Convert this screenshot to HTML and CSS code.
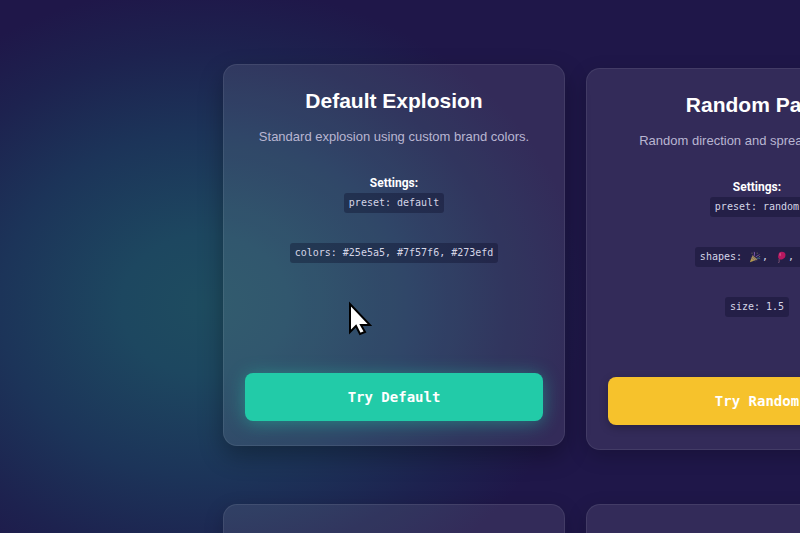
FILE: index.html
```html
<!DOCTYPE html>
<html lang="en">
  <head>
    <meta charset="UTF-8" />
    <meta name="viewport" content="width=device-width, initial-scale=1.0" />
    <title>Explosion Demos</title>
    <link rel="stylesheet" href="styles.css" />
  </head>
  <body>
    <main class="demo-grid">
      <section class="card card-active">
        <h2>Default Explosion</h2>
        <p class="description">Standard explosion using custom brand colors.</p>
        <div class="settings">
          <strong>Settings:</strong>
          <code>preset: default</code>
          <code>colors: #25e5a5, #7f57f6, #273efd</code>
        </div>
        <button type="button" class="btn btn-default">Try Default</button>
      </section>

      <section class="card">
        <h2>Random Party</h2>
        <p class="description">Random direction and spread with emoji.</p>
        <div class="settings">
          <strong>Settings:</strong>
          <code>preset: random</code>
          <code
            >shapes:
            <svg class="shape" viewBox="0 0 14 14" aria-hidden="true">
              <path d="M1 13 4 5l6 5z" fill="#b39a4c" />
              <path d="m3 8 4 4M4 6l5 5" stroke="#6c5a7c" />
              <path d="M6 6c0-2 1-3 0-5M8 7c1-2 3-1 4-3" fill="none" stroke="#8a62b8" />
              <path d="M9 9c1-1 3-1 4 0" fill="none" stroke="#4f8fa8" />
              <path d="M3 2h1v1H3zM9 2h1v1H9zM12 6h1v1h-1z" fill="#a8a060" /></svg
            >,
            <svg class="shape" viewBox="0 0 14 14" aria-hidden="true">
              <path d="M5 9c-1 2 1 3-1 5" fill="none" stroke="#8a5a78" />
              <path d="M8 1c3 0 5 2 4 5 0 2-3 4-6 4-2-1-3-3-2-5 0-2 1-4 4-4z" fill="#b81860" />
              <ellipse cx="6" cy="4" rx="1" ry="2" fill="#d04882" /></svg
            >,
            <svg class="shape" viewBox="0 0 14 14" aria-hidden="true">
              <path d="m7 1 2 4 4 2-4 2-2 4-2-4-4-2 4-2z" fill="#c9a640" /></svg
          ></code>
          <code>size: 1.5</code>
        </div>
        <button type="button" class="btn btn-random">Try Random</button>
      </section>

      <section class="card"></section>
      <section class="card"></section>
    </main>

    <svg class="cursor" viewBox="0 0 24 36" aria-hidden="true">
      <path
        d="M2 4v28l6-6 4 8 5-2-4-7h9z"
        fill="#fff"
        stroke="#000"
        stroke-width="2"
      />
    </svg>
  </body>
</html>
```

FILE: styles.css
```css
* {
  box-sizing: border-box;
}

body {
  position: relative;
  min-height: 100vh;
  max-height: 100vh;
  margin: 0;
  overflow: hidden;
  font-family: "Liberation Sans", Arial, sans-serif;
  color: #fff;
  background: radial-gradient(
      ellipse 380px 320px at 205px 305px,
      #1e4c60 0,
      #1d4760 22%,
      #1c3459 54%,
      #1d224f 80%,
      #1f1749 100%
    )
    #1f1749;
}

.demo-grid {
  display: grid;
  grid-template-columns: repeat(2, 342px);
  gap: 54px 21px;
  padding: 68px 0 0 223px;
}

.card {
  display: flex;
  flex-direction: column;
  min-height: 382px;
  padding: 21px 21px 24px;
  text-align: center;
  background: rgba(255, 255, 255, 0.09);
  border: 1px solid rgba(255, 255, 255, 0.08);
  border-radius: 14px;
  box-shadow: 0 6px 20px rgba(0, 0, 0, 0.2);
}

/* hover state: the card is lifted */
.card-active {
  transform: translateY(-4px);
  box-shadow: 0 10px 24px rgba(0, 0, 0, 0.3);
}

.card h2 {
  margin: 0;
  font-size: 21px;
  line-height: 30px;
}

.description {
  margin: 12px 0 0;
  font-size: 13px;
  line-height: 18px;
  color: #b9b6d2;
}

.settings {
  display: flex;
  flex-direction: column;
  align-items: center;
  margin: 27px 0;
}

.settings strong {
  font-family: Roboto, Arial, sans-serif;
  font-size: 12px;
  line-height: 20px;
}

.settings code {
  padding: 0 5px;
  font-family: "DejaVu Sans Mono", monospace;
  font-size: 10px;
  line-height: 20px;
  white-space: nowrap;
  color: #d5d5e6;
  background: rgba(10, 10, 40, 0.36);
  border-radius: 3px;
}

.settings code + code {
  margin-top: 30px;
}

.shape {
  width: 14px;
  height: 12px;
  vertical-align: middle;
}

.btn {
  height: 48px;
  margin-top: auto;
  font-family: "DejaVu Sans Mono", monospace;
  font-size: 14px;
  font-weight: bold;
  color: #fff;
  border: none;
  border-radius: 8px;
  box-shadow: 0 3px 8px rgba(0, 0, 0, 0.25);
  cursor: pointer;
}

.btn-default {
  background: #22cba8;
  box-shadow: 0 2px 18px rgba(34, 203, 168, 0.45);
}

.btn-random {
  background: #f6c22c;
}

.cursor {
  position: absolute;
  top: 300px;
  left: 348px;
  width: 24px;
  height: 36px;
  pointer-events: none;
}
```
